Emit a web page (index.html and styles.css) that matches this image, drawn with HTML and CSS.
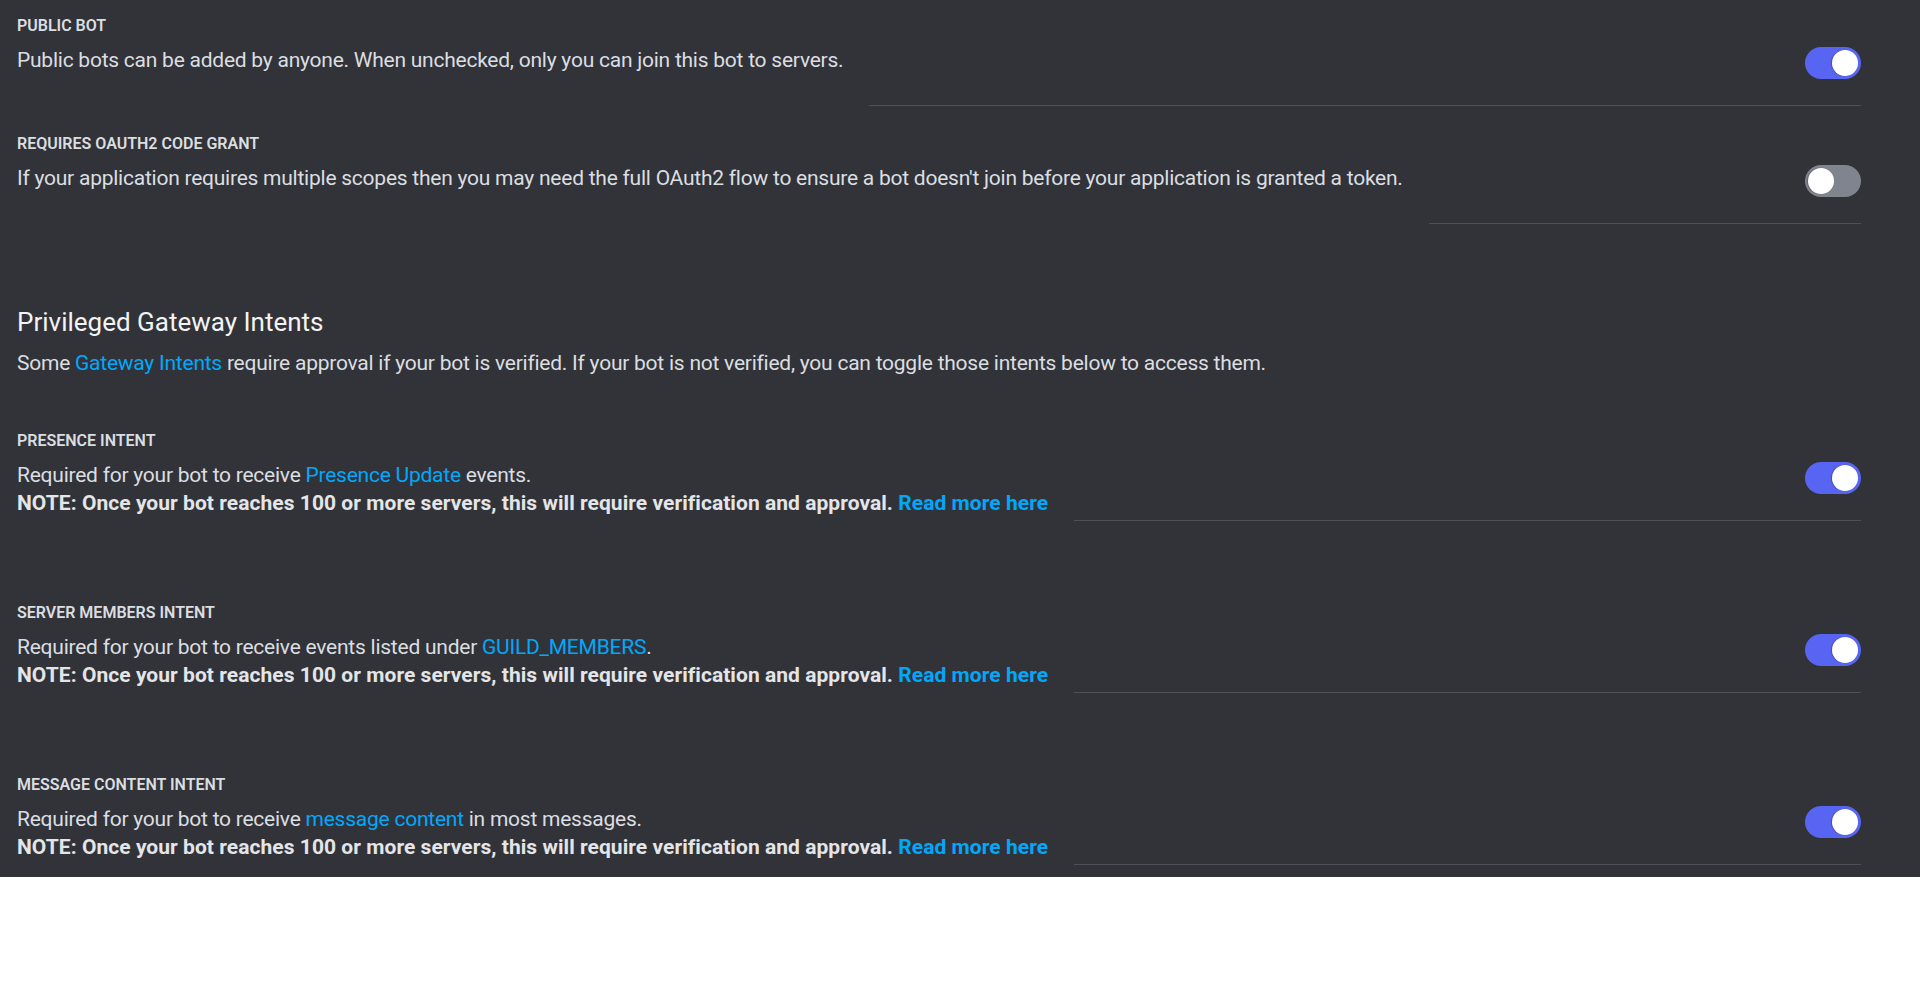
FILE: index.html
```html
<!DOCTYPE html>
<html lang="en">
<head>
<meta charset="utf-8">
<title>Bot settings</title>
<link rel="stylesheet" href="styles.css">
</head>
<body>
<main class="page">
  <section class="setting">
    <div class="label">PUBLIC BOT</div>
    <div class="row">
      <div class="desc">Public bots can be added by anyone. When unchecked, only you can join this bot to servers.</div>
      <div class="control"><div class="toggle on"><span class="knob"></span></div></div>
    </div>
  </section>
  <section class="setting">
    <div class="label">REQUIRES OAUTH2 CODE GRANT</div>
    <div class="row">
      <div class="desc">If your application requires multiple scopes then you may need the full OAuth2 flow to ensure a bot doesn't join before your application is granted a token.</div>
      <div class="control"><div class="toggle"><span class="knob"></span></div></div>
    </div>
  </section>

  <section class="intro">
    <h2 class="title">Privileged Gateway Intents</h2>
    <p class="subtitle">Some <a class="link" href="#">Gateway Intents</a> require approval if your bot is verified. If your bot is not verified, you can toggle those intents below to access them.</p>
  </section>

  <section class="setting intent first">
    <div class="label">PRESENCE INTENT</div>
    <div class="row">
      <div class="desc">
        <div>Required for your bot to receive <a class="link" href="#">Presence Update</a> events.</div>
        <div class="note">NOTE: Once your bot reaches 100 or more servers, this will require verification and approval. <a class="link" href="#">Read more here</a></div>
      </div>
      <div class="control"><div class="toggle on"><span class="knob"></span></div></div>
    </div>
  </section>
  <section class="setting intent">
    <div class="label">SERVER MEMBERS INTENT</div>
    <div class="row">
      <div class="desc">
        <div>Required for your bot to receive events listed under <a class="link" href="#">GUILD_MEMBERS</a>.</div>
        <div class="note">NOTE: Once your bot reaches 100 or more servers, this will require verification and approval. <a class="link" href="#">Read more here</a></div>
      </div>
      <div class="control"><div class="toggle on"><span class="knob"></span></div></div>
    </div>
  </section>
  <section class="setting intent">
    <div class="label">MESSAGE CONTENT INTENT</div>
    <div class="row">
      <div class="desc">
        <div>Required for your bot to receive <a class="link" href="#">message content</a> in most messages.</div>
        <div class="note">NOTE: Once your bot reaches 100 or more servers, this will require verification and approval. <a class="link" href="#">Read more here</a></div>
      </div>
      <div class="control"><div class="toggle on"><span class="knob"></span></div></div>
    </div>
  </section>
</main>
</body>
</html>
```

FILE: styles.css
```css
* { box-sizing: border-box; }
html, body {
  margin: 0;
  padding: 0;
  background: #ffffff;
}
body {
  font-family: Roboto, "Noto Sans", sans-serif;
  color: #dbdee1;
}
.page {
  background: #313338;
  padding: 16px 59px 12px 17px;
}
.label {
  padding-top: 1px;
  font-size: 16px;
  line-height: 18px;
  font-weight: 600;
  color: #dbdee1;
  text-transform: uppercase;
}
.row {
  display: flex;
  align-items: flex-start;
  margin-top: 12px;
}
.desc {
  flex: 0 1 auto;
  font-size: 21px;
  line-height: 28px;
  letter-spacing: -0.24px;
  color: #dbdee1;
  margin-top: -1px;
}
.note {
  font-weight: 700;
  letter-spacing: 0.05px;
  color: #e3e5e8;
}
.control {
  flex: 1 1 auto;
  margin-left: 26px;
  display: flex;
  justify-content: flex-end;
  padding-bottom: 26px;
  border-bottom: 1px solid #4e5058;
}
.toggle {
  position: relative;
  width: 56px;
  height: 32px;
  border-radius: 16px;
  background: #80848e;
}
.toggle.on {
  background: #5865f2;
}
.knob {
  position: absolute;
  top: 3px;
  left: 3px;
  width: 26px;
  height: 26px;
  border-radius: 50%;
  background: #ffffff;
  box-shadow: -1px 0 1px rgba(0, 0, 0, 0.25);
}
.toggle.on .knob {
  left: 27px;
}
.setting + .setting {
  margin-top: 28px;
}
.intro {
  margin-top: 83px;
}
.title {
  margin: 0;
  font-size: 26px;
  line-height: 30px;
  font-weight: 400;
  color: #f2f3f5;
}
.subtitle {
  margin: 12px 0 0;
  font-size: 21px;
  line-height: 28px;
  letter-spacing: -0.24px;
  color: #dbdee1;
}
.link {
  color: #00a8fc;
  text-decoration: none;
}
.setting.intent.first {
  margin-top: 54px;
}
.setting.intent + .setting.intent {
  margin-top: 82px;
}
```
